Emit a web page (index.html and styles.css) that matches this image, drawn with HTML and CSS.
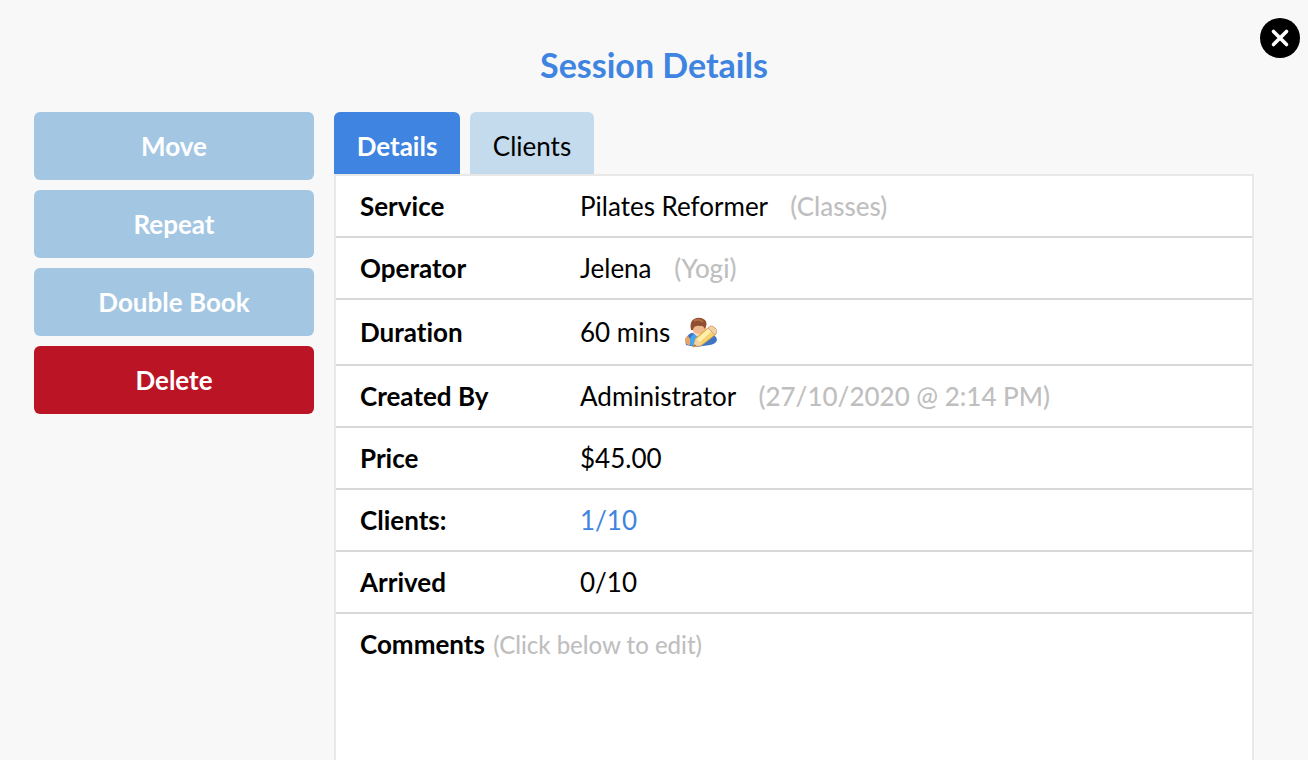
FILE: index.html
```
<!DOCTYPE html>
<html lang="en">
<head>
  <meta charset="UTF-8" />
  <meta name="viewport" content="width=device-width, initial-scale=1.0" />
  <title>Session Details</title>
  <link rel="stylesheet" href="styles.css">
</head>
<body>
  <button type="button" class="close" aria-label="Close">
    <svg width="40" height="40" viewBox="0 0 40 40">
      <circle cx="20" cy="20" r="20" fill="#000" />
      <path d="M13.5 13.5 L26.5 26.5 M26.5 13.5 L13.5 26.5" stroke="#fff" stroke-width="3.6" stroke-linecap="round" />
    </svg>
  </button>

  <h1>Session Details</h1>

  <div class="container">
    <div class="actions">
      <button type="button">Move</button>
      <button type="button">Repeat</button>
      <button type="button">Double Book</button>
      <button type="button" class="delete">Delete</button>
    </div>

    <div class="content">
      <div class="tabs" role="tablist">
        <button type="button" role="tab" aria-selected="true" class="active">Details</button>
        <button type="button" role="tab" aria-selected="false">Clients</button>
      </div>

      <div class="panel">
        <table>
          <tr>
            <th scope="row">Service</th>
            <td>Pilates Reformer <span class="note">(Classes)</span></td>
          </tr>
          <tr>
            <th scope="row">Operator</th>
            <td>Jelena <span class="note">(Yogi)</span></td>
          </tr>
          <tr class="duration">
            <th scope="row">Duration</th>
            <td>60 mins
              <!-- person with pencil -->
              <svg class="edit-icon" width="32" height="32" viewBox="0 0 32 32">
                <path d="M1 29 Q-1 21 6 17 L23 17 Q32 19 32 24 Q31 28 25 29 L11 31 Z" fill="#3f74c4" />
                <path d="M5 29 Q3 22 9 18 L21 17 L12 30 Z" fill="#45a5ee" />
                <path d="M0 24 Q0 21 3 20 L5 23 L5 29 Q0 29 0 24 Z" fill="#e8a564" />
                <path d="M8 17 L13 21 L21 17 L20 14 L9 14 Z" fill="#f9dcc2" />
                <ellipse cx="14" cy="12" rx="7" ry="6" fill="#f0b88f" />
                <path d="M6 14 Q4 6 9 3 Q15 0 20 4 Q23 7 20 13 Q18 9 15 10 Q9 9 8 14 Z" fill="#8f4f30" />
                <path d="M9 5 Q14 2 18 6" fill="none" stroke="#b36d42" stroke-width="2" />
                <path d="M8 31 L11 22 L24 11 L31 18 L17 29 Z" fill="#f5d36e" stroke="#d9a249" stroke-width="1" />
                <path d="M13 25 L25 14" stroke="#fff0ae" stroke-width="4" />
                <path d="M8 31 L11 22 L17 29 Z" fill="#f1d3a0" />
                <path d="M8 31 L9 28 L12 30 Z" fill="#a87a48" />
                <path d="M23 12 Q26 8 30 12 Q34 15 30 19 Z" fill="#f3cfa8" stroke="#dba472" stroke-width="1" />
              </svg>
            </td>
          </tr>
          <tr>
            <th scope="row">Created By</th>
            <td>Administrator <span class="note">(27/10/2020 @ 2:14 PM)</span></td>
          </tr>
          <tr>
            <th scope="row">Price</th>
            <td>$45.00</td>
          </tr>
          <tr>
            <th scope="row">Clients:</th>
            <td><a href="#clients">1/10</a></td>
          </tr>
          <tr>
            <th scope="row">Arrived</th>
            <td>0/10</td>
          </tr>
        </table>

        <div class="comments">
          <label for="comments">Comments <span>(Click below to edit)</span></label>
          <textarea id="comments" name="comments"></textarea>
        </div>
      </div>
    </div>
  </div>
</body>
</html>
```
FILE: styles.css
```
* {
  box-sizing: border-box;
}

body {
  display: flex;
  flex-direction: column;
  min-height: 100vh;
  margin: 0;
  background: #f8f8f8;
  color: #000;
  font-family: Lato, sans-serif;
  font-size: 26px;
  font-variant-ligatures: none;
  line-height: 32px;
}

button {
  border: none;
  font: inherit;
  cursor: pointer;
}

h1 {
  margin: 0;
  padding: 44px 0 26px;
  color: #3e84e0;
  font-size: 34px;
  line-height: 42px;
  text-align: center;
}

.close {
  position: absolute;
  top: 18px;
  right: 8px;
  padding: 0;
  background: none;
  border-radius: 50%;
}

.close svg {
  display: block;
}

.container {
  display: flex;
  flex: 1;
  gap: 20px;
  padding: 0 54px 0 34px;
}

/* Left hand buttons */
.actions {
  display: flex;
  flex: 0 0 280px;
  flex-direction: column;
  gap: 10px;
}

.actions button {
  padding: 18px;
  background: #a3c6e2;
  color: #fff;
  font-weight: bold;
  border-radius: 6px;
}

.actions .delete {
  background: #bb1525;
}

.content {
  display: flex;
  flex: 1;
  flex-direction: column;
}

.tabs {
  display: flex;
  gap: 10px;
}

.tabs button {
  min-width: 124px;
  padding: 18px 22px 12px;
  background: #c3dbed;
  color: #000;
  border-radius: 6px 6px 0 0;
}

.tabs .active {
  min-width: 126px;
  background: #3e84e0;
  color: #fff;
  font-weight: bold;
}

.panel {
  display: flex;
  flex: 1;
  flex-direction: column;
  background: #fff;
  border: 2px solid #e8e8e8;
  border-bottom: none;
}

table {
  width: 100%;
  border-spacing: 0;
}

th,
td {
  padding: 14px 0;
  border-bottom: 2px solid #d8d8d8;
  text-align: left;
}

th {
  width: 244px;
  padding-left: 24px;
}

.duration th,
.duration td {
  padding-top: 16px;
  padding-bottom: 16px;
}

.note {
  margin-left: 16px;
  color: #bfbfbf;
  font-weight: 500;
}

.edit-icon {
  margin-left: 8px;
  vertical-align: bottom;
}

a {
  color: #3e84e0;
  text-decoration: none;
}

.comments {
  display: flex;
  flex: 1;
  flex-direction: column;
  padding: 14px 24px 0;
}

.comments label {
  font-weight: bold;
}

.comments label span {
  margin-left: 2px;
  color: #bfbfbf;
  font-size: 24px;
  font-weight: 500;
}

textarea {
  flex: 1;
  width: 100%;
  padding: 0;
  background: none;
  border: none;
  outline: none;
  font: inherit;
  resize: none;
}
```
